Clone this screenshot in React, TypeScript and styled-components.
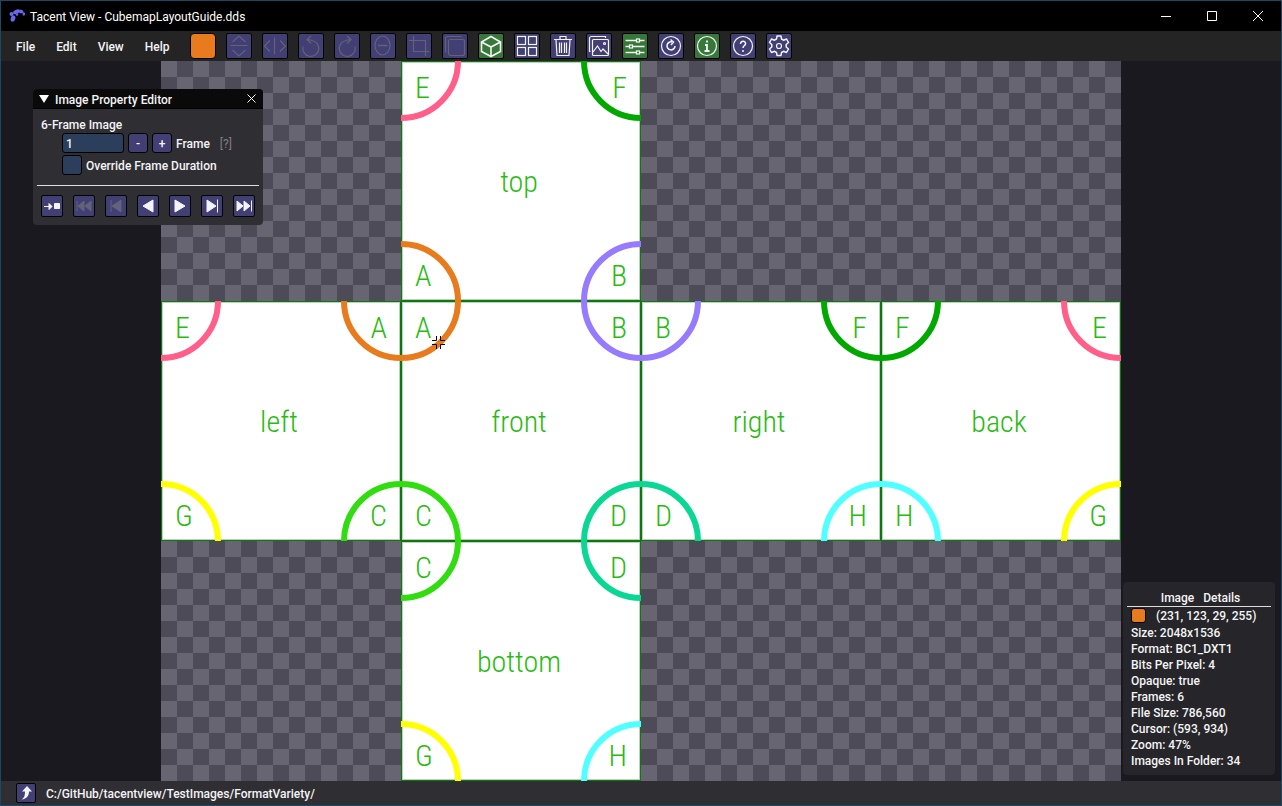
import React, { useState } from "react";
import styled, { createGlobalStyle, css } from "styled-components";

const colors = {
  frame: "#1d4865",
  stage: "#1a191f",
  menu: "#242424",
  status: "#2f2e33",
  panel: "#2f2e33",
  details: "#262529",
  button: "#413f73",
  active: "#38773a",
  field: "#2b3e5b",
  text: "#f4f4f6",
  faded: "#646279",
  swatch: "#e77b1d",
  line: "#117611",
  lineSoft: "#b4d6b4",
  letter: "#2abb12",
};

const GlobalStyle = createGlobalStyle`
  *, *::before, *::after { box-sizing: border-box; }
  body { margin: 0; background: ${colors.stage}; }
  button, input { font: inherit; color: inherit; margin: 0; padding: 0; }
  svg { display: block; }
`;

const Window = styled.div`
  display: flex;
  flex-direction: column;
  height: 100vh;
  border: 1px solid ${colors.frame};
  color: ${colors.text};
  font: 500 12px/16px Roboto, "Liberation Sans", sans-serif;
`;

/* Title bar */

const TitleBar = styled.header`
  display: flex;
  align-items: center;
  flex: none;
  height: 30px;
  padding-left: 8px;
  background: #000;
`;

const Title = styled.h1`
  flex: 1;
  margin: 0 0 0 4px;
  padding-top: 2px;
  font-size: 12px;
  font-weight: 400;
  color: #fff;
`;

const WindowButton = styled.button`
  display: grid;
  place-items: center;
  width: 46px;
  height: 30px;
  border: 0;
  background: none;
`;

/* Menu and tool bar */

const MenuBar = styled.div`
  display: flex;
  align-items: center;
  flex: none;
  height: 30px;
  padding-left: 15px;
  gap: 20px;
  background: ${colors.menu};
`;

const Menus = styled.nav`
  display: flex;
  gap: 21px;
`;

const MenuButton = styled.button`
  padding-top: 2px;
  border: 0;
  background: none;
`;

const Tools = styled.div`
  display: flex;
  gap: 10px;
`;

const ToolButton = styled.button<{ $active?: boolean }>`
  width: 26px;
  height: 26px;
  border: 1px solid #000;
  border-radius: 2px;
  background: ${(p) => (p.$active ? colors.active : colors.button)};
  color: ${colors.text};
  &:disabled { color: ${colors.faded}; }
`;

const ColorButton = styled(ToolButton)`
  border-radius: 4px;
  background: ${colors.swatch};
`;

/* Stage and cubemap */

const Stage = styled.main`
  position: relative;
  display: flex;
  justify-content: center;
  flex: 1;
  min-height: 0;
  background: ${colors.stage};
`;

const Artboard = styled.div`
  position: relative;
  display: grid;
  grid-template: repeat(3, 1fr) / repeat(4, 1fr);
  height: 100%;
  aspect-ratio: 4 / 3;
  background: repeating-conic-gradient(#4c4b57 0 25%, #666571 0 50%) 0 0 / 32px 32px;
`;

const FaceBox = styled.section<{ $row: number; $col: number }>`
  position: relative;
  display: flex;
  flex-direction: column;
  justify-content: space-between;
  grid-row: ${(p) => p.$row};
  grid-column: ${(p) => p.$col};
  padding: 15px 13px 13px;
  border: 1px solid ${colors.line};
  box-shadow: inset 0 0 0 1px ${colors.lineSoft};
  background: #fff;
  color: ${colors.letter};
  font: 350 30px/22px "Roboto Condensed", "Liberation Sans Narrow", Roboto, sans-serif;
`;

const CornerRow = styled.div`
  display: flex;
  justify-content: space-between;
`;

const FaceName = styled.h2`
  margin: 0;
  padding-right: 4px;
  font: inherit;
  text-align: center;
`;

const Arcs = styled.svg`
  position: absolute;
  inset: -1px;
  width: calc(100% + 2px);
  height: calc(100% + 2px);
`;

const Cursor = styled.svg`
  position: absolute;
  left: 270px;
  top: 274px;
`;

/* Floating panels */

const PropertyPanel = styled.section`
  position: absolute;
  left: 32px;
  top: 28px;
  width: 230px;
  border-radius: 4px;
  overflow: hidden;
  background: ${colors.panel};
`;

const PanelTitle = styled.header`
  display: flex;
  align-items: center;
  gap: 6px;
  height: 20px;
  padding: 0 6px;
  background: #0a0a0a;
  border-bottom: 1px solid #000;
`;

const PanelName = styled.h2`
  flex: 1;
  margin: 0;
  padding-top: 2px;
  font: inherit;
`;

const PlainButton = styled.button`
  border: 0;
  background: none;
`;

const PanelBody = styled.div`
  display: flex;
  flex-direction: column;
  padding: 8px 4px;
`;

const PanelLabel = styled.p`
  margin: 0 4px;
`;

const FieldRow = styled.div`
  display: flex;
  align-items: center;
  gap: 4px;
  margin-bottom: 2px;
  padding-left: 25px;
`;

const FieldLabel = styled.label`
  padding-top: 2px;
`;

const fieldLook = css`
  height: 20px;
  border: 1px solid #000;
  border-radius: 3px;
  background: ${colors.field};
`;

const NumberField = styled.input`
  ${fieldLook}
  width: 62px;
  padding: 2px 3px 0;
`;

const TickBox = styled.input`
  ${fieldLook}
  appearance: none;
  width: 20px;
  &:checked { background: ${colors.button}; }
`;

const StepButton = styled.button`
  width: 20px;
  height: 20px;
  padding-top: 1px;
  border: 1px solid #000;
  border-radius: 3px;
  background: ${colors.button};
`;

const Hint = styled.span`
  margin-left: 6px;
  padding-top: 2px;
  color: #807f83;
  font-weight: 400;
`;

const Rule = styled.hr`
  width: 100%;
  height: 1px;
  margin: 8px 0 9px;
  border: 0;
  background: #dcdcdf;
`;

const Transport = styled.div`
  display: flex;
  gap: 10px;
  padding: 0 4px;
`;

const TransportButton = styled.button`
  width: 22px;
  height: 22px;
  border: 1px solid #000;
  border-radius: 2px;
  background: ${colors.button};
  &:disabled { color: ${colors.faded}; }
`;

const DetailsPanel = styled.aside`
  position: absolute;
  right: 6px;
  bottom: 6px;
  width: 152px;
  padding: 8px 4px 6px;
  border-radius: 4px;
  background: ${colors.details};
`;

const DetailsTitle = styled.h2`
  margin: 0;
  padding-left: 3px;
  border-bottom: 1px solid #dcdcdf;
  font: inherit;
  text-align: center;
  white-space: pre;
`;

const DetailsList = styled.ul`
  margin: 0;
  padding: 0 4px;
  list-style: none;
`;

const ColorRow = styled.li`
  display: flex;
  align-items: center;
  gap: 10px;
  height: 17px;
  margin-bottom: 1px;
`;

const Swatch = styled.span`
  width: 15px;
  height: 15px;
  border: 1px solid #000;
  border-radius: 3px;
  background: ${colors.swatch};
`;

/* Status bar */

const StatusBar = styled.footer`
  display: flex;
  align-items: center;
  flex: none;
  gap: 10px;
  height: 24px;
  padding-left: 15px;
  background: ${colors.status};
`;

const UpButton = styled(TransportButton)`
  width: 20px;
  height: 20px;
`;

const Path = styled.span`
  padding-top: 2px;
`;

/* Data */

const tint = {
  A: "#e77b1d",
  B: "#977bff",
  C: "#31dd10",
  D: "#0bd795",
  E: "#ff5f88",
  F: "#00a800",
  G: "#ffff00",
  H: "#50ffff",
};
type Corner = keyof typeof tint;

interface FaceInfo {
  name: string;
  row: number;
  col: number;
  corners: [Corner, Corner, Corner, Corner];
}

const faces: FaceInfo[] = [
  { name: "top", row: 1, col: 2, corners: ["E", "F", "A", "B"] },
  { name: "left", row: 2, col: 1, corners: ["E", "A", "G", "C"] },
  { name: "front", row: 2, col: 2, corners: ["A", "B", "C", "D"] },
  { name: "right", row: 2, col: 3, corners: ["B", "F", "D", "H"] },
  { name: "back", row: 2, col: 4, corners: ["F", "E", "H", "G"] },
  { name: "bottom", row: 3, col: 2, corners: ["C", "D", "G", "H"] },
];

const details = [
  "Size: 2048x1536",
  "Format: BC1_DXT1",
  "Bits Per Pixel: 4",
  "Opaque: true",
  "Frames: 6",
  "File Size: 786,560",
  "Cursor: (593, 934)",
  "Zoom: 47%",
  "Images In Folder: 34",
];

interface Tool {
  label: string;
  icon: React.ReactNode;
  active?: boolean;
  disabled?: boolean;
}

const tools: Tool[] = [
  {
    label: "Flip vertically",
    disabled: true,
    icon: <path d="M6.500 9 13 3l6.500 6M4.500 12.500h17M6.500 17l6.500 6 6.500-6" />,
  },
  {
    label: "Flip horizontally",
    disabled: true,
    icon: <path d="M8 7.500 2.500 13 8 18.500M12.500 4.500v17M18 7.500l5.500 5.500-5.500 5.500" />,
  },
  {
    label: "Rotate left",
    disabled: true,
    icon: <path d="M13 3 9 6.500l4 4M9.500 6.500q3.500.5 4.500 1A8 8 0 1 1 5 13.500" />,
  },
  {
    label: "Rotate right",
    disabled: true,
    icon: <path d="M13 3l4 3.500-4 4M16.500 6.500q-3.500.5-4.500 1A8 8 0 1 0 21 13.500" />,
  },
  {
    label: "Zoom out",
    disabled: true,
    icon: <><ellipse cx="12.500" cy="12.500" rx="7.500" ry="9.500" /><path strokeWidth="1.500" d="M8 12.500h9.500" /></>,
  },
  {
    label: "Crop",
    disabled: true,
    icon: <path d="M7.500 3v15.500H23M3 7.500h16.500V23" />,
  },
  {
    label: "Resize canvas",
    disabled: true,
    icon: (
      <>
        <rect x="6.500" y="6.500" width="16" height="16" rx="2" />
        <path d="M4 19.500c-.5-.5-.5-1-.5-2v-12a2 2 0 0 1 2-2h12c1 0 1.500 0 2 .5" />
      </>
    ),
  },
  {
    label: "Cubemap",
    active: true,
    icon: <path strokeWidth="1.600" d="M13 3.500l9.500 5.500v9.500L13 23.500l-9.500-5V9zM3.500 9l9.500 5 9.500-5M13 14v9.500" />,
  },
  {
    label: "Contact sheet",
    icon: (
      <>
        <rect x="3.500" y="3.500" width="8" height="8" />
        <rect x="14.500" y="3.500" width="8" height="8" />
        <rect x="3.500" y="14.500" width="8" height="8" />
        <rect x="14.500" y="14.500" width="8" height="8" />
      </>
    ),
  },
  {
    label: "Delete",
    icon: (
      <path d="M4 6.500h18M10 6.500v-3h6v3M6 7l1 15.500h12L20 7M9.500 9.500v10.500M11.500 9.500v10.500M14.500 9.500v10.500M16.500 9.500v10.500" />
    ),
  },
  {
    label: "Content view",
    icon: (
      <>
        <path d="M4.500 18.500H3.500v-13a2 2 0 0 1 2-2h14v1.500" />
        <rect x="6.500" y="6.500" width="16" height="16" rx="1" />
        <path d="M7 19l4.500-6 3.500 5.500 2-2.500 5 5" />
        <circle cx="18.500" cy="10.500" r="1" />
      </>
    ),
  },
  {
    label: "Property editor",
    active: true,
    icon: (
      <>
        <path strokeWidth="1.600" d="M3.500 7.500h11M18 7.500h4.500M3.500 13.500h4M11 13.500h11.500M3.500 19.500h11M18 19.500h4.500" />
        <rect x="14.500" y="6" width="3" height="3" />
        <rect x="7.500" y="12" width="3" height="3" />
        <rect x="14.500" y="18" width="3" height="3" />
      </>
    ),
  },
  {
    label: "Refresh",
    icon: (
      <>
        <circle cx="13" cy="13" r="9.500" />
        <path strokeWidth="1.500" d="M17 13a4 4 0 1 1-3-4M12.500 6.500l3 2.500-2.500 3" />
      </>
    ),
  },
  {
    label: "Image details",
    active: true,
    icon: (
      <>
        <circle cx="13" cy="13" r="9.500" />
        <path strokeWidth="1.800" d="M13 7.500v2M11 12h2v6M10.500 18h5" />
      </>
    ),
  },
  {
    label: "Help",
    icon: (
      <>
        <circle cx="13" cy="13" r="9.500" />
        <path strokeWidth="1.500" d="M10.500 11c0-4 5.500-3.500 5 0-.3 1.500-2.500 1.800-2.500 4M13 17v2" />
      </>
    ),
  },
  {
    label: "Preferences",
    icon: (
      <>
        <path
          strokeWidth="1.500"
          strokeLinejoin="round"
          d="M11 3h4l.5 3 2 1.200 3-1.200 2 3.500-2.300 2v2.500l2.300 2-2 3.500-3-1.200-2 1.200-.5 3h-4l-.5-3-2-1.200-3 1.200-2-3.500 2.300-2v-2.500l-2.300-2 2-3.500 3 1.200 2-1.200z"
        />
        <circle cx="13" cy="13" r="2.500" />
      </>
    ),
  },
];

const transport = [
  {
    label: "Stop after frame",
    icon: <path d="M3 11.500h8M8 8.500l3 3-3 3v-3zM13.500 8.500h5v5h-5z" />,
    disabled: false,
  },
  { label: "First frame", icon: <path d="M4 6v10M11 6v10l-6-5zM18 6v10l-6-5z" />, disabled: true },
  { label: "Previous frame", icon: <path d="M6 5v12M16 5v12l-9-6z" />, disabled: true },
  { label: "Play backwards", icon: <path d="M16 5v12L6 11z" />, disabled: false },
  { label: "Play", icon: <path d="M6 5v12l10-6z" />, disabled: false },
  { label: "Next frame", icon: <path d="M6 5v12l9-6zM16.500 4.500v13" />, disabled: false },
  { label: "Last frame", icon: <path d="M4 6v10l6-5zM11 6v10l6-5zM18.500 5.500v11" />, disabled: false },
];

function Face({ name, row, col, corners }: FaceInfo) {
  const [tl, tr, bl, br] = corners;
  return (
    <FaceBox $row={row} $col={col}>
      <Arcs viewBox="0 0 240 240" fill="none" strokeWidth="6" aria-hidden="true">
        <circle cx="0" cy="0" r="57" stroke={tint[tl]} />
        <circle cx="240" cy="0" r="57" stroke={tint[tr]} />
        <circle cx="0" cy="240" r="57" stroke={tint[bl]} />
        <circle cx="240" cy="240" r="57" stroke={tint[br]} />
      </Arcs>
      <CornerRow><span>{tl}</span><span>{tr}</span></CornerRow>
      <FaceName>{name}</FaceName>
      <CornerRow><span>{bl}</span><span>{br}</span></CornerRow>
    </FaceBox>
  );
}

export default function App() {
  const [frame, setFrame] = useState(1);
  const [override, setOverride] = useState(false);

  return (
    <>
      <GlobalStyle />
      <Window>
        <TitleBar>
          <svg width="17" height="16" viewBox="0 0 17 16" fill="#6a68ee" aria-hidden="true">
            <circle cx="2.500" cy="6" r="2" />
            <ellipse cx="4" cy="10.500" rx="2.300" ry="3.200" transform="rotate(15 4 10.500)" />
            <ellipse cx="7.500" cy="3.800" rx="3.600" ry="2" transform="rotate(-25 7.500 3.800)" />
            <ellipse cx="12" cy="3.500" rx="2.600" ry="1.700" transform="rotate(15 12 3.500)" />
            <ellipse cx="14.800" cy="6" rx="1.300" ry="1.800" />
            <circle cx="8" cy="6.500" r="1.200" />
          </svg>
          <Title>Tacent View - CubemapLayoutGuide.dds</Title>
          <WindowButton aria-label="Minimize">
            <svg width="10" height="10" stroke="#fff"><path d="M0 5.500h10" /></svg>
          </WindowButton>
          <WindowButton aria-label="Maximize">
            <svg width="10" height="10" stroke="#fff" fill="none"><path d="M.5.500h9v9h-9z" /></svg>
          </WindowButton>
          <WindowButton aria-label="Close">
            <svg width="10" height="10" stroke="#fff"><path d="M0 0l10 10M10 0L0 10" /></svg>
          </WindowButton>
        </TitleBar>

        <MenuBar>
          <Menus>
            {["File", "Edit", "View", "Help"].map((m) => (
              <MenuButton key={m}>{m}</MenuButton>
            ))}
          </Menus>
          <Tools>
            <ColorButton aria-label="Pixel colour" />
            {tools.map((t) => (
              <ToolButton key={t.label} aria-label={t.label} $active={t.active} disabled={t.disabled}>
                <svg width="24" height="24" viewBox="1 1 24 24" fill="none" stroke="currentColor" strokeWidth="1.200">
                  {t.icon}
                </svg>
              </ToolButton>
            ))}
          </Tools>
        </MenuBar>

        <Stage>
          <Artboard>
            {faces.map((f) => (
              <Face key={f.name} {...f} />
            ))}
            <Cursor width="15" height="15" fill="none" stroke="#000" aria-hidden="true">
              <path d="M5.500 1v4.500H1M9.500 1v4.500H14M5.500 14V9.500H1M9.500 14V9.500H14" />
            </Cursor>
          </Artboard>

          <PropertyPanel>
            <PanelTitle>
              <svg width="10" height="8" fill="#fff" aria-hidden="true"><path d="M0 0h10L5 8z" /></svg>
              <PanelName>Image Property Editor</PanelName>
              <PlainButton aria-label="Close panel">
                <svg width="10" height="9" stroke="#fff"><path d="M.5.500l8 8M8.500.500l-8 8" /></svg>
              </PlainButton>
            </PanelTitle>
            <PanelBody>
              <PanelLabel>6-Frame Image</PanelLabel>
              <FieldRow>
                <NumberField id="frame" value={frame} onChange={(e) => setFrame(Number(e.target.value) || 1)} />
                <StepButton aria-label="Previous" onClick={() => setFrame(Math.max(1, frame - 1))}>-</StepButton>
                <StepButton aria-label="Next" onClick={() => setFrame(Math.min(6, frame + 1))}>+</StepButton>
                <FieldLabel htmlFor="frame">Frame</FieldLabel>
                <Hint>[?]</Hint>
              </FieldRow>
              <FieldRow>
                <TickBox id="override" type="checkbox" checked={override} onChange={() => setOverride(!override)} />
                <FieldLabel htmlFor="override">Override Frame Duration</FieldLabel>
              </FieldRow>
              <Rule />
              <Transport>
                {transport.map((t) => (
                  <TransportButton key={t.label} aria-label={t.label} disabled={t.disabled}>
                    <svg width="20" height="20" viewBox="1 1 20 20" fill="currentColor" stroke="currentColor">
                      {t.icon}
                    </svg>
                  </TransportButton>
                ))}
              </Transport>
            </PanelBody>
          </PropertyPanel>

          <DetailsPanel>
            <DetailsTitle>{"Image   Details"}</DetailsTitle>
            <DetailsList>
              <ColorRow><Swatch />(231, 123, 29, 255)</ColorRow>
              {details.map((d) => (
                <li key={d}>{d}</li>
              ))}
            </DetailsList>
          </DetailsPanel>
        </Stage>

        <StatusBar>
          <UpButton aria-label="Parent folder">
            <svg width="18" height="18" viewBox="0 0 18 18" fill="currentColor">
              <path d="M10 2l5 5.500h-3c0 4-2 7.500-7.500 8C7 14 8 12 8 7.500H5z" />
            </svg>
          </UpButton>
          <Path>C:/GitHub/tacentview/TestImages/FormatVariety/</Path>
        </StatusBar>
      </Window>
    </>
  );
}
